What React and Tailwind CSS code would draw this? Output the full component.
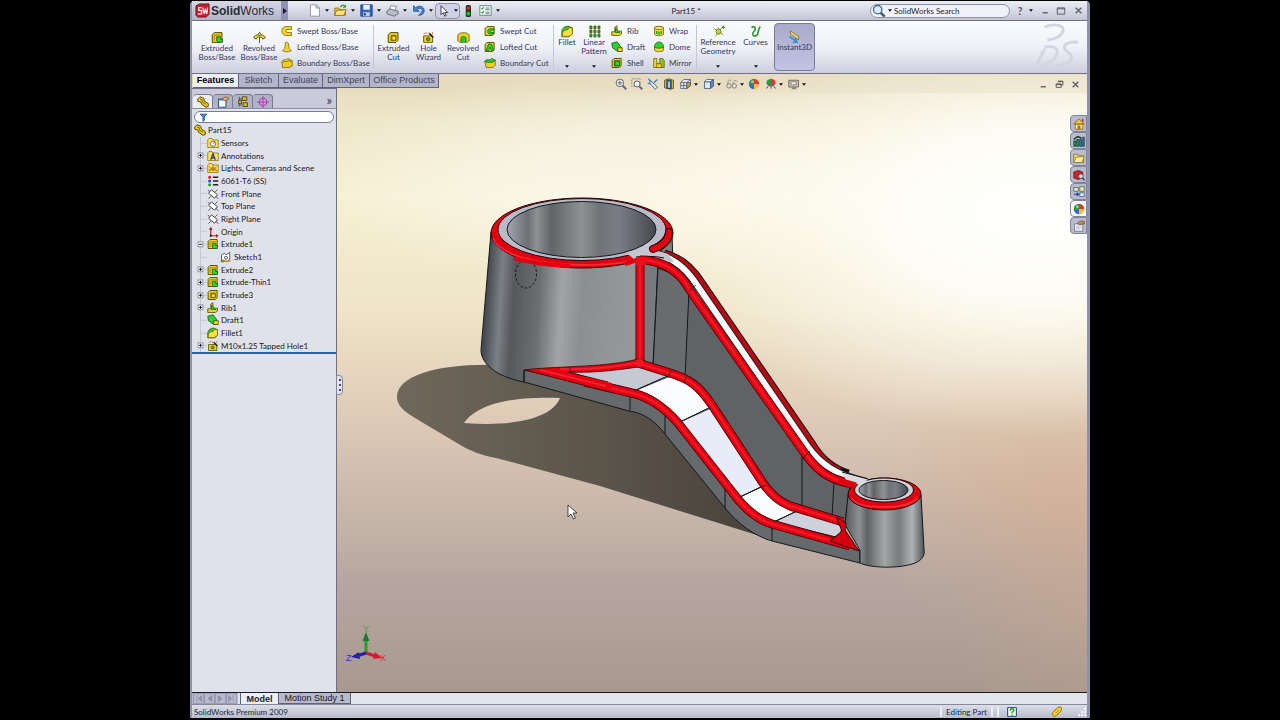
import React from "react";

const INK = "#4d4700";

/* ---------- icon shapes, all on a 16 x 16 grid ---------- */
const block = (
  <path d="M1.5 4.5 4 2h9.5v9.5L11 14H1.5z" fill="#f0d020" stroke={INK} strokeWidth="1.2" />
);
const folder = (
  <path d="M1 4 2.500 2h4l1.500 2H15v10H1z" fill="#ffe45c" stroke="#8a6a10" strokeWidth="1" />
);

const SHAPES = {
  extrude: (
    <>
      {block}
      <path d="M4 5h8M4 5v7" stroke="#8c7a00" fill="none" />
      <path d="M7 7h4.500v3H14v4h-5l-2-2z" fill="#3ccf34" stroke="#0a5a10" />
    </>
  ),
  revolve: (
    <>
      <path d="M8 1v14" stroke="#3a3a3a" />
      <path d="M8 4.500C3 4.500 1 6.500 1 8.500l3 1.500c0-2 2-2.500 4-2.500s4 .5 4 2.500l3-1.500C15 6.500 13 4.500 8 4.500z" fill="#f5d321" stroke={INK} />
      <circle cx="8" cy="4" r="1.600" fill="#fff2a0" stroke={INK} />
    </>
  ),
  sweep: (
    <path d="M14 2H7C3 2 1 5 1 8s2 6 6 6h7v-4H8c-2 0-2-4 0-4h6z" fill="#f7d423" stroke="#7a6400" />
  ),
  loft: <path d="M6 2c2-1 4 0 4 2l1 6 3 3c-3 2-9 2-12 0l3-3z" fill="#f7d423" stroke="#7a6400" />,
  boundary: (
    <>
      <path d="M1 6c3-4 6-1 8-4l6 3v7l-4 2H2z" fill="#f0cf20" stroke="#6f5b00" />
      <path d="M2 7c3-2 6 0 8-2l4 1" stroke="#6f5b00" fill="none" />
    </>
  ),
  cut: (
    <>
      {block}
      <path d="M5 5.500h6v6H5z" fill="#b59a00" stroke={INK} />
      <path d="M7 7.500h3v3H7z" fill="#fbe95a" />
    </>
  ),
  hole: (
    <>
      <path d="M2 6h9l2 2v6H2z" fill="#f0d020" stroke={INK} />
      <circle cx="7.500" cy="10" r="2" fill="#36b52c" stroke={INK} />
      <path d="m9 3 5 5" stroke="#222" strokeWidth="2" />
      <path d="M2 3h2M5 1v2M13 1v3M7 4l1-2" stroke="#c9681b" />
    </>
  ),
  revcut: (
    <>
      <path d="M1 5c2-4 12-4 14 0v7l-3 2H4l-3-2z" fill="#f0d020" stroke="#6f5b00" />
      <path d="M5 14V9c0-3 6-3 6 0v5" fill="#2fc72f" stroke="#0a6a10" />
    </>
  ),
  sweepcut: (
    <>
      {block}
      <path d="M13 5H9c-3 0-4 1-4 3.500S6 12 9 12h4v-2H9c-1 0-1-3 0-3h4z" fill="#2fd12f" stroke="#0a6a10" />
    </>
  ),
  loftcut: (
    <>
      {block}
      <path d="M6 4h4l3 9h-3l-2-5-2 5H3z" fill="#2fd12f" stroke="#0a6a10" />
    </>
  ),
  boundarycut: (
    <>
      <path d="M1 6h11l3-2v7l-3 3H3z" fill="#f0d020" stroke="#6f5b00" />
      <path d="M1 6c3-5 7 0 9-4l5 2-3 3H4z" fill="#2fc72f" stroke="#0a6a10" />
    </>
  ),
  fillet: (
    <>
      <path d="M1 9c0-5 3-7.500 8-7.500l5 2V11l-4 3.500H1z" fill="#2fc72f" stroke={INK} />
      <path d="M2 14c-1-5 1-8 6-8l2-3 4 1v7l-4 3z" fill="#f9df3c" stroke="#6f5b00" strokeWidth=".8" />
    </>
  ),
  pattern: (
    <>
      {[2, 7, 12].map((x) =>
        [1, 6, 11].map((y) => (
          <rect key={x + "-" + y} x={x} y={y} width="3" height="4" rx="1" fill={y === 11 ? "#2ba32b" : "#5d7d12"} stroke="#1d4d0c" strokeWidth=".6" />
        ))
      )}
    </>
  ),
  rib: (
    <>
      <path d="M1 9h4V3l3-2v8l6-1v4l-3 2H1z" fill="#f0d020" stroke={INK} />
      <path d="M6 10V4l6 6z" fill="#2fc72f" stroke="#0a6a10" />
    </>
  ),
  draft: (
    <>
      <path d="M1 3 8 1l6 8v5H9L2 9z" fill="#2fd12f" stroke="#0a4a10" />
      <path d="M9 9h6v5H9z" fill="#f5d728" stroke={INK} />
    </>
  ),
  shell: (
    <>
      {block}
      <path d="M4.500 5h7v7h-7z" fill="#1f9e1f" stroke="#0a4a10" />
      <path d="M6.500 7h4v3.500h-4z" fill="#3be03b" />
    </>
  ),
  wrap: (
    <>
      <path d="M2 4c0-3 12-3 12 0v8c0 3-12 3-12 0z" fill="#f5d728" stroke="#6f5b00" />
      <ellipse cx="8" cy="4" rx="6" ry="2" fill="#fff08a" stroke="#6f5b00" />
      <path d="M4 8h2v4H4zM7 9h2v4H7zM10 8h2v4h-2z" fill="#1faa1f" />
    </>
  ),
  dome: (
    <>
      <path d="M2 8v4c0 3 12 3 12 0V8z" fill="#f5d728" stroke="#6f5b00" />
      <path d="M2 8c0-9 12-9 12 0 0 2-12 2-12 0z" fill="#2fd12f" stroke="#0a6a10" />
    </>
  ),
  mirror: (
    <>
      <path d="M1 2h4v7h3v5H1z" fill="#f5d728" stroke="#6f5b00" />
      <path d="M9 2h4l2 3v9H9z" fill="#8dc424" stroke="#4b6b00" />
      <path d="M5 9h6v5H5z" fill="#f5d728" stroke="#6f5b00" />
    </>
  ),
  refgeo: (
    <>
      <path d="m2 4 12 8M14 1 4 14M8 3v9" stroke="#6c8a12" fill="none" />
      <circle cx="8" cy="8" r="3" fill="#d7d32a" stroke="#4d7a10" />
      <path d="M12 3h4M14 1v4" stroke="#1b7d1b" />
    </>
  ),
  curves: <path d="M3 3c5-3 6 2 3 5s-1 7 3 5 1-8 5-11" fill="none" stroke="#189a2c" strokeWidth="2" />,
  instant: (
    <>
      <path d="m3 1 10 7v4L3 5z" fill="#f3dd62" stroke="#7c6a20" />
      <path d="m2 8 8 6M6 15h5l-2-5" fill="none" stroke="#2d8fd4" strokeWidth="2" />
    </>
  ),
  part: (
    <>
      <path d="M1 4 4 1l5 2 1 4 5 3v4l-3 1-6-4-1-3-4-1z" fill="#f2cf18" stroke="#4d3f00" strokeWidth="1.200" />
      <path d="m4 4 3 1v3l5 3" fill="none" stroke="#4d3f00" />
    </>
  ),
  property: (
    <>
      <path d="M2 4h10v11H2z" fill="#f6f8ff" stroke="#36547e" strokeWidth="1.400" />
      <path d="M2 4h10v2H2z" fill="#4a76b4" />
      <path d="M7 4c2-3 5-3 8-2v3l-5 1z" fill="#f0b070" stroke="#7a4a20" />
    </>
  ),
  config: (
    <>
      <path d="M3 1v13M3 4h4M3 12h4" stroke="#333" fill="none" />
      <path d="M7 1h6v5H7zM8 9h6v5H8zM2 6h4v4H2z" fill="#d9b91a" stroke="#3d3300" />
    </>
  ),
  target: (
    <>
      <circle cx="8" cy="8" r="5" fill="none" stroke="#c02fc4" strokeWidth="1.500" />
      <path d="M8 0v16M0 8h16" stroke="#c02fc4" strokeWidth="1.300" />
    </>
  ),
  sensors: (
    <>
      {folder}
      <circle cx="8" cy="9" r="3.500" fill="#fff" stroke="#444" />
      <path d="m8 9 2-2" stroke="#222" />
    </>
  ),
  annotations: (
    <>
      {folder}
      <path d="m5 13 3-8 3 8M6 10.500h4" fill="none" stroke="#1c2f80" strokeWidth="1.600" />
    </>
  ),
  lights: (
    <>
      {folder}
      <path d="M3 12c2-6 8-6 10 0l-3-2-2 2-2-2zM8 4v3M3 6l2 2M13 6l-2 2" fill="#d9831c" stroke="#a85a00" />
    </>
  ),
  material: (
    <>
      <circle cx="3.500" cy="3" r="2" fill="#d42020" />
      <circle cx="3.500" cy="8" r="2" fill="#2040c0" />
      <circle cx="3.500" cy="13" r="2" fill="#1c9a2c" />
      <path d="M8 3h7M8 8h7M8 13h7" stroke="#222" strokeWidth="1.800" />
    </>
  ),
  plane: (
    <>
      <path d="M6 2.500 14 9l-4 4.500L2 7z" fill="#fff" stroke="#333" strokeWidth="1.200" />
      <path d="M1 2.500 3.500 5M12 11l3 3.500M14 2l-3 3M5 11l-3 3" stroke="#333" fill="none" />
    </>
  ),
  origin: (
    <>
      <path d="M5 14V3M5 13h9" stroke="#b01818" strokeWidth="1.600" />
      <path d="m2.500 5 2.500-4 2.500 4zM12 10.500 15.500 13 12 15.500z" fill="#b01818" />
      <circle cx="5" cy="13" r="1.500" fill="#222" />
    </>
  ),
  sketch: (
    <>
      <path d="M2 13V5l4-2 2 2 5-3v9l-4 3z" fill="#fff" stroke="#333" />
      <circle cx="8" cy="9" r="2" fill="none" stroke="#333" />
      <path d="m3 12 6 2 5-1" stroke="#c98a2c" strokeWidth="2" fill="none" />
      <path d="M1 13h4v2H1z" fill="#2a9d2a" />
    </>
  ),
  file: <path d="M3 1h7l4 4v10H3zM10 1v4h4" fill="#fff" stroke="#7d879c" />,
  open: (
    <>
      <path d="M1 5h5l1 2h7v7H1z" fill="#f1c232" stroke="#8f6c10" />
      <path d="m3 8 12-1-3 7H1z" fill="#ffe27a" stroke="#8f6c10" />
      <path d="M8 4c2-4 4-3 6 0M14 4V1M14 4h-3" fill="none" stroke="#2aa52a" strokeWidth="1.500" />
    </>
  ),
  save: (
    <>
      <path d="M1 1h14v14H1z" fill="#2f63c4" stroke="#173a86" />
      <path d="M4 1h8v6H4z" fill="#e6eefc" />
      <path d="M4 10h8v5H4z" fill="#bccbe6" />
      <path d="M5 11h2v3H5z" fill="#173a86" />
    </>
  ),
  print: (
    <>
      <path d="m4 7 2-5 7 1-2 5z" fill="#fff" stroke="#6f7688" />
      <path d="m1 9 4-3 10 3v3l-5 3-9-3z" fill="#b9bdc9" stroke="#555b6b" />
    </>
  ),
  undo: (
    <path d="M2 2v7h7L6.500 6.500c3-2 6-1 6 1.500S10 12 8 14c4 0 7-2 7-6 0-5-6-7-10.500-3.500z" fill="#3e84d8" stroke="#1d4f9c" />
  ),
  arrow: <path d="M4 1v12l3-3 2 5 2-1-2-4h4z" fill="#fff" stroke="#2b2f45" strokeWidth="1.200" />,
  traffic: (
    <>
      <rect x="5" y="0" width="7" height="16" rx="2" fill="#1d3a1d" />
      <circle cx="8.500" cy="4" r="2.300" fill="#e02828" />
      <circle cx="8.500" cy="11.500" r="2.500" fill="#22c32c" />
    </>
  ),
  options: (
    <>
      <path d="M1 2h14v12H1z" fill="#eef7ee" stroke="#5f7a6f" />
      <path d="m3 5 1 1 2-2M3 10l1 1 2-2" stroke="#1c9a2c" fill="none" strokeWidth="1.300" />
      <path d="M8 5h5M8 7h5M8 10h5M8 12h5" stroke="#5b6b8c" />
    </>
  ),
  lens: (
    <>
      <path d="m9.500 9.500 5 5" stroke="#556" strokeWidth="3" />
      <circle cx="6.500" cy="6.500" r="4.800" fill="#d7eefa" stroke="#3b6c90" strokeWidth="1.500" />
    </>
  ),
  zoomfit: (
    <>
      <path d="m10 10 5 5" stroke="#667" strokeWidth="2.500" />
      <circle cx="6.500" cy="6.500" r="5" fill="#e9edf0" stroke="#667" strokeWidth="1.300" />
      <path d="M6.500 3.500v6M3.500 6.500h6" stroke="#444" />
    </>
  ),
  zoomarea: (
    <>
      <path d="M1 1h11v10H1z" fill="none" stroke="#666" strokeDasharray="2 1.500" />
      <path d="m11 11 4 4" stroke="#667" strokeWidth="2.500" />
      <circle cx="8" cy="8" r="4" fill="#e9edf0" stroke="#667" strokeWidth="1.300" />
    </>
  ),
  prevview: (
    <>
      <path d="m5 4 9 8-3 3-8-9z" fill="#e7eef6" stroke="#3d5d88" strokeWidth="1.200" />
      <path d="m9 6 5-4M1 8l4-1M2 1l3 4" stroke="#2d7fc8" strokeWidth="1.700" />
    </>
  ),
  section: (
    <>
      <path d="m2 3 5-2 7 2v11l-4 1-8-2z" fill="#d8b02c" stroke="#4a4630" />
      <path d="M5 3h6v11H5z" fill="#2f6fb0" stroke="#234" />
      <path d="M7 5h2v8H7z" fill="#d6e4f2" />
    </>
  ),
  orient: (
    <>
      <path d="M1 6h8v8H1zM1 6l4-4h9v8l-5 4M9 6l5-4M5 6v8M1 10h8" fill="#e5e8ee" stroke="#4a5468" />
      <path d="M9 6h5v4l-5 4z" fill="#c79a52" stroke="#4a5468" />
    </>
  ),
  display: (
    <>
      <path d="M2 5h8v9H2z" fill="#dce6f5" stroke="#35507c" />
      <path d="m2 5 3-3h9l-4 3z" fill="#f4f8ff" stroke="#35507c" />
      <path d="m10 5 4-3v9l-4 3z" fill="#5f86c2" stroke="#35507c" />
    </>
  ),
  glasses: (
    <>
      <circle cx="4" cy="10.500" r="3" fill="none" stroke="#778" strokeWidth="1.200" />
      <circle cx="11" cy="10.500" r="3" fill="none" stroke="#778" strokeWidth="1.200" />
      <path d="M2 8c1-6 4-6 5-4M9 8c1-6 5-5 6-3" fill="none" stroke="#778" />
    </>
  ),
  ball: (
    <>
      <circle cx="8" cy="8" r="7" fill="#e8e8ea" />
      <path d="M8 8V1a7 7 0 0 0-7 7z" fill="#2c9a3a" />
      <path d="M8 8V1a7 7 0 0 1 7 7z" fill="#e0362c" />
      <path d="M8 8h7a7 7 0 0 1-7 7z" fill="#f0c22c" />
      <path d="M8 8v7a7 7 0 0 1-7-7z" fill="#2f6fd0" />
      <circle cx="6" cy="5" r="2" fill="#fff" opacity=".5" />
    </>
  ),
  scene: (
    <>
      <path d="M8 8V1a6 6 0 0 0-6 7z" fill="#2c9a3a" />
      <path d="M8 8V1a6 6 0 0 1 6 7z" fill="#e0362c" />
      <path d="M2 8h12l-3 3H5z" fill="#667" />
      <path d="m4 11-2 3M8 11v3M12 11l2 3" stroke="#444" strokeWidth="1.300" />
    </>
  ),
  viewset: (
    <>
      <path d="M1 3h13v9H1z" fill="#c9c3b8" stroke="#55524c" />
      <path d="M4 5h7v4H4z" fill="#f2efe8" stroke="#77736b" />
      <path d="M5 12h6v3H5z" fill="#8c877c" />
    </>
  ),
  home: (
    <>
      <path d="M3 8h10v7H3z" fill="#ffe9a0" stroke="#7c5a10" />
      <path d="m1 8 7-7 7 7z" fill="#f4c53c" stroke="#7c4a10" />
      <path d="M12 1h2v4h-2z" fill="#c9252c" />
      <path d="M6 10h4v5H6z" fill="#a8701c" />
    </>
  ),
  library: (
    <>
      <path d="M1 8h3v7H1zM5 6h3v9H5z" fill="#2d9d5a" stroke="#14352c" />
      <path d="M9 6l2-1 1 10H9zM13 3h2v12h-2z" fill="#3f7fc8" stroke="#14352c" />
      <path d="m1 6 5-4 5 2" stroke="#14352c" strokeWidth="2" fill="none" />
    </>
  ),
  openfolder: (
    <>
      <path d="M1 3h5l1 2h7v9H1z" fill="#f4d36a" stroke="#8f6c10" />
      <path d="m4 7 11-1-3 8H1z" fill="#ffeeb0" stroke="#8f6c10" />
    </>
  ),
  swsearch: (
    <>
      <path d="m1 4 6-2 6 2v8l-6 2-6-2z" fill="#c9252c" stroke="#6d1014" />
      <circle cx="10.500" cy="9.500" r="3" fill="#eef" stroke="#445" />
      <path d="m12.500 12 3 3" stroke="#445" strokeWidth="2" />
    </>
  ),
  palette: (
    <>
      <path d="M1 2h6v5H1zM9 1h6v6H9z" fill="#f3e9a0" stroke="#44597d" />
      <path d="M9 9h6v5H9z" fill="#dfe6f2" stroke="#44597d" />
      <path d="M1 11h6M5 9l2.500 2L5 13" stroke="#1c3fb8" strokeWidth="1.600" fill="none" />
    </>
  ),
  custom: (
    <>
      <path d="M2 5h11v10H2z" fill="#eceff6" stroke="#666c7c" />
      <path d="M4 8h7M4 10h7M4 12h5" stroke="#b8bccc" />
      <path d="M6 5c2-4 6-4 9-3v3l-6 1z" fill="#c9905a" stroke="#6b4322" />
    </>
  ),
  help: (
    <>
      <path d="M1 1h14v14H1z" fill="#eaffea" stroke="#2b3f7c" strokeWidth="1.600" />
      <path d="M5 6c0-4 6-4 6-1 0 2-3 2-3 5M8 11.500v2" fill="none" stroke="#149a24" strokeWidth="2.200" />
    </>
  ),
  tag: (
    <>
      <path d="M2 9 9 2c2-1 5-1 5 1s0 3-1 4l-6 6c-3 2-7-1-5-4z" fill="#f6cf27" stroke="#8f6c10" strokeWidth="1.300" />
      <path d="m6 10 5-5" stroke="#a67f10" />
    </>
  ),
  funnel: <path d="M2 2h12l-4.500 5v6L7 15V7z" fill="#3f8fe0" stroke="#173f86" strokeWidth="1.300" />,
  min: <path d="M3 12h9" stroke="#555a68" strokeWidth="2.400" />,
  max: <path d="M2 3h12v10H2zM2 4.500h12" fill="none" stroke="#555a68" strokeWidth="1.500" />,
  restore: <path d="M5 2h9v7h-3M2 7h9v6H2zM5 3h9M2 8h9" fill="none" stroke="#444" strokeWidth="1.500" />,
  close: <path d="m3 3 10 10M13 3 3 13" stroke="#555a68" strokeWidth="2.200" />,
};

function Icon({ name, className = "size-3" }) {
  return (
    <svg viewBox="0 0 16 16" className={"shrink-0 " + className} aria-hidden="true">
      {SHAPES[name]}
    </svg>
  );
}

function Caret() {
  return (
    <svg viewBox="0 0 6 4" className="h-[3px] w-1 shrink-0" aria-hidden="true">
      <path d="M0 0h6L3 4z" fill="#111" />
    </svg>
  );
}

/* ---------- title bar ---------- */
function QuickButton({ icon, label, caret = true }) {
  return (
    <button aria-label={label} className="flex w-[26px] items-center justify-center gap-1">
      <Icon name={icon} className="size-[13px]" />
      {caret && <Caret />}
    </button>
  );
}

function TitleBar() {
  return (
    <header className="flex h-5 items-center border-b border-[#6d7085] bg-gradient-to-b from-[#eceef5] to-[#c3c6d6]">
      <div className="flex h-full w-24 items-center bg-gradient-to-b from-[#d6d8e6] to-[#b2b5ca] pl-[3px]">
        <svg viewBox="0 0 16 16" className="size-[15px] shrink-0" aria-hidden="true">
          <path d="m1 3 4-2h10v11l-3 3H3l-2-2z" fill="#c71f2b" stroke="#75101a" />
          <path d="M7 5H4v3h3v3.500H3M8.500 5l1 6.500L11 7l1.500 4.500 1-6.500" fill="none" stroke="#fff" strokeWidth="1.300" />
        </svg>
        <span className="pl-px font-['Liberation_Sans',sans-serif] text-xs leading-none text-[#2a2b33]">
          <b>Solid</b>Works
        </span>
        <button aria-label="Show menus" className="ml-auto flex h-full w-[7px] items-center justify-center bg-[#8f93b5]">
          <svg viewBox="0 0 4 6" className="h-[6px] w-1"><path d="M0 0v6l4-3z" fill="#16182c" /></svg>
        </button>
      </div>
      <div className="ml-[17px] flex h-full items-center">
        <QuickButton icon="file" label="New" />
        <QuickButton icon="open" label="Open" />
        <QuickButton icon="save" label="Save" />
        <QuickButton icon="print" label="Print" />
        <QuickButton icon="undo" label="Undo" />
        <button aria-label="Select" className="flex h-4 w-[25px] items-center justify-center gap-1 rounded-sm border border-[#8b8fae] bg-[#cfd1e4]">
          <Icon name="arrow" className="size-3" />
          <Caret />
        </button>
        <button aria-label="Rebuild" className="flex w-4 justify-center"><Icon name="traffic" /></button>
        <QuickButton icon="options" label="Options" />
      </div>
      <h1 className="flex-1 text-center">Part15 *</h1>
      <label className="flex h-3.5 w-[140px] items-center gap-0.5 rounded-full border border-[#8e91a6] bg-[#f1f2f8] pl-px">
        <Icon name="lens" className="size-3.5" />
        <Caret />
        <input aria-label="Search" defaultValue="SolidWorks Search" className="w-full min-w-0 bg-transparent outline-none" />
      </label>
      <div className="flex items-center pl-[3px]">
        <button aria-label="Help" className="flex w-6 items-center justify-center gap-1.5 text-[11px] font-bold text-[#555a68]">
          ?<Caret />
        </button>
        <button aria-label="Minimize" className="flex w-4 justify-center"><Icon name="min" className="size-[9px]" /></button>
        <button aria-label="Maximize" className="flex w-4 justify-center"><Icon name="max" className="size-[10px]" /></button>
        <button aria-label="Close" className="flex w-[18px] justify-center"><Icon name="close" className="size-[9px]" /></button>
      </div>
    </header>
  );
}

/* ---------- ribbon ---------- */
function Tool({ icon, lines, width, caret, className = "pt-2.5" }) {
  return (
    <button className={"flex h-full flex-col items-center " + width + " " + className}>
      <Icon name={icon} className="size-[13px]" />
      <span className="flex flex-col leading-[9px]">
        {lines.map((l) => (
          <span key={l}>{l}</span>
        ))}
      </span>
      {caret && <span className="mt-auto flex pb-[5px]"><Caret /></span>}
    </button>
  );
}

function ToolList({ items, className }) {
  return (
    <ul className={"flex h-full flex-col justify-between py-1 " + className}>
      {items.map(([icon, label]) => (
        <li key={label}>
          <button className="flex items-center gap-1 leading-3">
            <Icon name={icon} />
            {label}
          </button>
        </li>
      ))}
    </ul>
  );
}

const Divider = () => <div className="h-11 w-px shrink-0 bg-[#c3c6d6]" />;

function Ribbon() {
  return (
    <div className="flex h-[53px] items-center whitespace-nowrap border-b border-[#6d7085] bg-gradient-to-b from-[#fbfcfe] via-[#f0f1f7] to-[#cdcfde] pl-1 text-[#33375a]">
      <Tool icon="extrude" lines={["Extruded", "Boss/Base"]} width="w-[42px]" />
      <Tool icon="revolve" lines={["Revolved", "Boss/Base"]} width="w-[42px]" />
      <ToolList className="w-[93px] pl-px" items={[["sweep", "Swept Boss/Base"], ["loft", "Lofted Boss/Base"], ["boundary", "Boundary Boss/Base"]]} />
      <Divider />
      <Tool icon="cut" lines={["Extruded", "Cut"]} width="w-[39px]" />
      <Tool icon="hole" lines={["Hole", "Wizard"]} width="w-[31px]" />
      <Tool icon="revcut" lines={["Revolved", "Cut"]} width="w-[38px]" />
      <ToolList className="w-[71px] pl-0.5" items={[["sweepcut", "Swept Cut"], ["loftcut", "Lofted Cut"], ["boundarycut", "Boundary Cut"]]} />
      <Divider />
      <Tool icon="fillet" lines={["Fillet"]} width="w-[26px]" caret className="pt-1" />
      <Tool icon="pattern" lines={["Linear", "Pattern"]} width="w-[28px]" caret className="pt-1" />
      <ToolList className="w-[42px] pl-[3px]" items={[["rib", "Rib"], ["draft", "Draft"], ["shell", "Shell"]]} />
      <ToolList className="w-[46px] pl-[3px]" items={[["wrap", "Wrap"], ["dome", "Dome"], ["mirror", "Mirror"]]} />
      <Divider />
      <Tool icon="refgeo" lines={["Reference", "Geometry"]} width="w-[42px]" caret className="pt-1" />
      <Tool icon="curves" lines={["Curves"]} width="w-[33px]" caret className="pt-1" />
      <button className="ml-0.5 flex h-12 w-[41px] flex-col items-center rounded-sm border border-[#777a9c] bg-gradient-to-b from-[#a9abcc] to-[#c3c4e2] pt-1.5 leading-[9px]">
        <Icon name="instant" className="size-[13px]" />
        Instant3D
      </button>
      <svg viewBox="0 0 50 50" className="ml-auto mr-1.5 h-12 w-12" fill="none" stroke="#d3d5e0" strokeWidth="3" aria-hidden="true">
        <path d="M12 4c10-4 22-2 19 5-2 5-9 8-16 9" />
        <path d="M12 25c10-2 16 2 12 9s-13 12-21 12l9-19" />
        <path d="M47 20c-9-1-16 2-14 7 2 4 9 5 7 10-2 6-10 8-18 7" />
      </svg>
    </div>
  );
}

/* ---------- tabs over the viewport ---------- */
const TABS = [
  ["Features", "w-[46px]"],
  ["Sketch", "w-10"],
  ["Evaluate", "w-11"],
  ["DimXpert", "w-[47px]"],
  ["Office Products", "w-[69px]"],
];

function CommandTabs() {
  return (
    <nav role="tablist" className="relative z-10 flex h-3.5 whitespace-nowrap pl-px font-['Liberation_Sans',sans-serif] text-[9px] leading-3">
      {TABS.map(([label, width], i) => (
        <button
          key={label}
          role="tab"
          aria-selected={i === 0}
          className={
            "flex justify-center border-r border-b border-[#5f6278] " +
            width +
            (i === 0 ? " bg-[#eceef5] font-bold text-black" : " bg-[#b3b6ca] text-[#3f4257]")
          }
        >
          {label}
        </button>
      ))}
    </nav>
  );
}

/* ---------- feature tree ---------- */
const TREE = [
  [0, "part", "Part15", ""],
  [1, "sensors", "Sensors", ""],
  [1, "annotations", "Annotations", "+"],
  [1, "lights", "Lights, Cameras and Scene", "+"],
  [1, "material", "6061-T6 (SS)", ""],
  [1, "plane", "Front Plane", ""],
  [1, "plane", "Top Plane", ""],
  [1, "plane", "Right Plane", ""],
  [1, "origin", "Origin", ""],
  [1, "extrude", "Extrude1", "-"],
  [2, "sketch", "Sketch1", ""],
  [1, "extrude", "Extrude2", "+"],
  [1, "extrude", "Extrude-Thin1", "+"],
  [1, "cut", "Extrude3", "+"],
  [1, "rib", "Rib1", "+"],
  [1, "draft", "Draft1", ""],
  [1, "fillet", "Fillet1", ""],
  [1, "hole", "M10x1.25 Tapped Hole1", "+"],
];

function Expander({ sign }) {
  return (
    <svg viewBox="0 0 13 13" className="h-full w-[13px] shrink-0" aria-hidden="true">
      <path d="M6.500 0v13M6.500 6.500H13" stroke="#c3c5cc" />
      {sign && <rect x="4" y="4" width="5" height="5" fill="#fff" stroke="#8a8d99" />}
      {sign && <path d={sign === "+" ? "M5 6.500h3M6.500 5v3" : "M5 6.500h3"} stroke="#111" />}
    </svg>
  );
}

function FeaturePanel() {
  return (
    <aside className="relative flex w-[145px] shrink-0 flex-col border-t border-r border-[#6d7085] bg-[#dfe2ea]">
      <div className="flex h-5 items-end border-b border-[#8b8ea3] bg-[#c9cbdb] pl-px">
        {["part", "property", "config", "target"].map((n, i) => (
          <button
            key={n}
            aria-label={n}
            className={
              "flex h-3.5 w-5 items-center justify-center rounded-t-sm border-t border-r border-[#777a90] " +
              (i === 0 ? "bg-[#eceef5]" : "bg-[#b0b3c8]")
            }
          >
            <Icon name={n} />
          </button>
        ))}
        <button aria-label="Expand panel" className="ml-auto pr-1 text-[13px] leading-[15px] text-[#333650]">»</button>
      </div>
      <label className="mx-0.5 mt-0.5 flex h-3 items-center rounded-full border border-[#777c95] bg-white pl-1">
        <Icon name="funnel" className="size-[9px]" />
        <input aria-label="Filter" className="w-full min-w-0 bg-transparent outline-none" />
      </label>
      <ul className="mt-px grid h-[230px] auto-rows-fr border-b-2 border-[#2f64a0] pl-0.5 text-[#16171f]">
        {TREE.map(([depth, icon, label, sign]) => (
          <li key={label} className="flex items-center leading-3">
            {depth > 0 && <Expander sign={sign} />}
            {depth > 1 && <span className="w-[13px]" />}
            <Icon name={icon} />
            <span className="whitespace-nowrap pl-0.5">{label}</span>
          </li>
        ))}
      </ul>
      <button aria-label="Collapse panel" className="absolute top-[286px] -right-[7px] flex h-5 w-[7px] flex-col items-center justify-evenly rounded-r-sm border border-[#85889b] bg-[#e3e5ee]">
        <i className="size-0.5 bg-[#4a4d75]" />
        <i className="size-0.5 bg-[#4a4d75]" />
        <i className="size-0.5 bg-[#4a4d75]" />
      </button>
    </aside>
  );
}

/* ---------- model drawing ---------- */
function Pipe({ d, w = 8 }) {
  return (
    <g fill="none" strokeLinejoin="round">
      <path d={d} stroke="#3a0004" strokeWidth={w + 1} />
      <path d={d} stroke="#e00010" strokeWidth={w - 0.5} />
      <path d={d} stroke="#ff2530" strokeWidth={w / 3} opacity=".6" />
    </g>
  );
}

const UPPER = "M640 260C658 260 672 266 684 281L694 296 806 455C818 471 828 479 852 484";
const INNER = "M638 363 670 373C690 379 699 386 712 405L763 483C773 498 784 505 797 508L843 522";
const LOWER = "M585 382 632 393C650 397 664 407 678 423L733 493C744 508 756 519 772 524L850 546";

function Scene() {
  return (
    <svg viewBox="192 73 895 620" preserveAspectRatio="xMidYMid slice" className="absolute inset-0 size-full" role="img" aria-label="Bracket model">
      <defs>
        <linearGradient id="bg" x1="0" y1="0" x2="0" y2="1">
          <stop offset="0" stopColor="#e4d9bb" />
          <stop offset=".08" stopColor="#efe7cb" />
          <stop offset=".2" stopColor="#f6f0d4" />
          <stop offset=".38" stopColor="#efe4c8" />
          <stop offset=".52" stopColor="#e2d0ba" />
          <stop offset=".66" stopColor="#cfbcae" />
          <stop offset=".82" stopColor="#b5a7a0" />
          <stop offset="1" stopColor="#a8998f" />
        </linearGradient>
        <radialGradient id="glow">
          <stop offset="0" stopColor="#fff" />
          <stop offset=".4" stopColor="#fffffa" stopOpacity=".85" />
          <stop offset="1" stopColor="#fffdf0" stopOpacity="0" />
        </radialGradient>
        <radialGradient id="tan">
          <stop offset="0" stopColor="#dba985" stopOpacity=".6" />
          <stop offset="1" stopColor="#dba985" stopOpacity="0" />
        </radialGradient>
        <linearGradient id="body" x1="481" x2="640" y1="0" y2="10" gradientUnits="userSpaceOnUse">
          <stop offset="0" stopColor="#5d6164" />
          <stop offset=".08" stopColor="#7b7f84" />
          <stop offset=".15" stopColor="#45494f" />
          <stop offset=".24" stopColor="#7b8087" />
          <stop offset=".32" stopColor="#55595c" />
          <stop offset=".48" stopColor="#6b6f70" />
          <stop offset=".62" stopColor="#a1a5a5" />
          <stop offset=".75" stopColor="#8b8f8f" />
          <stop offset="1" stopColor="#939797" />
        </linearGradient>
        <linearGradient id="bore">
          <stop offset="0" stopColor="#a3a6b0" />
          <stop offset=".14" stopColor="#6c7074" />
          <stop offset=".2" stopColor="#8d9194" />
          <stop offset=".3" stopColor="#606467" />
          <stop offset=".5" stopColor="#8e9292" />
          <stop offset=".62" stopColor="#6f7376" />
          <stop offset=".75" stopColor="#7a7d86" />
          <stop offset="1" stopColor="#45484c" />
        </linearGradient>
        <linearGradient id="boss">
          <stop offset="0" stopColor="#55595b" />
          <stop offset=".18" stopColor="#8c9092" />
          <stop offset=".28" stopColor="#5f6365" />
          <stop offset=".5" stopColor="#a3a7a7" />
          <stop offset=".68" stopColor="#777b7c" />
          <stop offset=".85" stopColor="#b0b3b6" />
          <stop offset="1" stopColor="#505355" />
        </linearGradient>
        <linearGradient id="shadow" x1="0" x2="1">
          <stop offset="0" stopColor="#6f685b" />
          <stop offset=".5" stopColor="#5d564c" />
          <stop offset="1" stopColor="#47413a" />
        </linearGradient>
        <filter id="soft"><feGaussianBlur stdDeviation=".6" /></filter>
      </defs>

      <rect x="192" y="73" width="895" height="620" fill="url(#bg)" />
      <ellipse cx="1060" cy="500" rx="200" ry="150" fill="url(#tan)" opacity=".7" />
      <ellipse cx="1090" cy="620" rx="140" ry="120" fill="url(#tan)" opacity=".4" />
      <ellipse cx="1040" cy="215" rx="400" ry="220" fill="url(#glow)" />
      <ellipse cx="640" cy="180" rx="330" ry="110" fill="url(#glow)" opacity=".5" />
      <rect x="192" y="73" width="895" height="20" fill="#e6dbc0" opacity=".35" />

      <path filter="url(#soft)" fillRule="evenodd" fill="url(#shadow)" d="M500 365C440 363 397 375 397 397 397 409 412 416 425 424L462 446C474 453 486 456 500 459L600 486 760 536 770 500 640 380ZM464 423C475 408 500 396 560 398 552 418 515 427 464 423Z" />

      <g stroke="#15171a" strokeWidth="1" strokeLinejoin="round">
        <path d="M660 215 672 235 673 262 650 262Z" fill="#7b7f80" />
        <path d="M491 232 481 350C481 364 497 377 524 382L600 392 640 392V250Z" fill="url(#body)" />
        <path d="M524 370 632 393C650 397 664 407 678 423L733 493C744 508 756 519 772 524L860 550V563L772 541C755 536 739 525 725 508L665 434C655 421 644 413 629 411L524 382Z" fill="#666a6c" />
        <path d="M640 262H660C672 266 680 274 694 296L806 455C818 471 828 479 850 486L845 524 797 508C784 505 773 498 763 483L712 405C699 386 690 379 670 373L638 363Z" fill="#5f6365" />
        <path d="M640 262H658L653 366 638 363Z" fill="#777b7c" />
        <path d="M658 268C670 272 680 278 689 290L685 378 653 367Z" fill="#686c6e" />
        <path d="M565 371 638 365 670 375 634 391Z" fill="#c6c9d4" />
        <path d="M634 391 670 375C690 381 699 388 711 407L680 422C666 407 652 396 634 391Z" fill="#fafcff" />
        <path d="M680 422 711 407 765 485 740 497Z" fill="#e6ecf8" />
        <path d="M740 497 765 485C774 499 784 507 797 511L774 522C758 519 748 508 740 497Z" fill="#fafcff" />
        <path d="M774 522 797 511 842 525 840 538Z" fill="#cfd2dc" />
        <path d="M802 455V507M834 482 832 518M524 370V382M630 393V411M665 412V434M725 486V508M772 524V541" fill="none" />
      </g>

      <path d="M848 495 845 525 860 550V563C870 568 900 569 915 563 922 560 925 556 924 549L921 495Z" fill="url(#boss)" stroke="#15171a" />

      <path d="M664 255C680 259 691 269 700 283L811 445C820 460 832 470 848 475" fill="none" stroke="#111" strokeWidth="11" />
      <path d="M664 255C680 259 691 269 700 283L811 445C820 460 830 468 840 472" fill="none" stroke="#b80812" strokeWidth="9" />
      <path d="M648 253C668 254 684 265 697 285L808 447C820 464 836 475 866 482" fill="none" stroke="#222" strokeWidth="8" />
      <path d="M648 253C668 254 684 265 697 285L808 447C820 464 836 475 866 482" fill="none" stroke="#f7f8fc" strokeWidth="6" />

      <ellipse cx="582" cy="233" rx="91" ry="35" fill="#e00010" stroke="#2a0002" />
      <path d="M493 238C500 256 540 265 582 265S640 260 652 255" fill="none" stroke="#ff3a44" strokeWidth="2" opacity=".7" />
      <ellipse cx="582" cy="229.500" rx="84" ry="31" fill="#b9bcc8" stroke="#2a0002" />
      <path d="M625 252 648 243 655 250 668 254 674 262 658 262 634 259Z" fill="#c3c6d0" />
      <path d="M636 257C645 256 655 256 664 258" fill="none" stroke="#2a0002" />
      <ellipse cx="581.500" cy="229.500" rx="74.500" ry="28" fill="url(#bore)" stroke="#15171a" />
      <path d="M653 249C664 245 669 240 669 232" fill="none" stroke="#2a0002" strokeWidth="8" strokeLinecap="round" />
      <path d="M653 249C664 245 669 240 669 232" fill="none" stroke="#e00010" strokeWidth="6" strokeLinecap="round" />

      <ellipse cx="526" cy="274" rx="10.500" ry="14" fill="none" stroke="#111" strokeDasharray="2.500 2" />
      <path d="M514 258C530 263 550 265 570 266" fill="none" stroke="#e00010" strokeWidth="4" />

      <Pipe d={UPPER} />
      <Pipe d="M640 262V363" />
      <path d="M625 264C631 263 634 261 640 258" fill="none" stroke="#e00010" strokeWidth="4" />
      <path d="M636 257h10v8h-10z" fill="#e8101c" />
      <Pipe d={INNER} />
      <Pipe d={LOWER} />
      <path d="M525 370C550 366 605 368 638 359V367C612 371 590 373 568 372L608 382 606 391Z" fill="#e40010" stroke="#3a0004" strokeWidth=".8" />
      <path d="M586 377 612 383 610 391 584 385Z" fill="#e40010" />
      <path d="M540 370 606 386M560 369C590 370 615 367 636 363" fill="none" stroke="#ff3540" strokeWidth="2" opacity=".6" />
      <path d="M836 517 846 523 845 530 859 551 830 541 842 531Z" fill="#d5000e" stroke="#3a0004" />
      <circle cx="639.500" cy="363" r="4" fill="#f01622" />
      <path d="m634 391 34-14M680 422l31-14M740 497l26-12M774 522l23-11M689 291l7-6M802 459l8-8M671 370l-3 8M687 376l-4 7M570 367v6" stroke="#222" fill="none" strokeWidth=".8" />

      <ellipse cx="884.500" cy="494" rx="36.500" ry="16" fill="#e00010" stroke="#2a0002" />
      <path d="M851 498C858 507 872 507 886 507S910 505 918 498" fill="none" stroke="#ff3a44" strokeWidth="2" opacity=".7" />
      <ellipse cx="884" cy="490" rx="29.500" ry="12" fill="#d0d3dc" stroke="#2a0002" />
      <path d="M842 473 868 479 862 486 846 480Z" fill="#d9dbe3" />
      <path d="M842 472 868 479" stroke="#111" fill="none" />
      <path d="M838 480 856 485" stroke="#e00010" strokeWidth="5" />
      <ellipse cx="883.500" cy="490" rx="24.500" ry="9.500" fill="url(#bore)" stroke="#15171a" />

      <g strokeWidth="3">
        <path d="M366 653V640" stroke="#2c9a34" />
        <path d="m362.500 641 3.500-9 3.500 9z" fill="#1f7a28" />
        <path d="m366 653 9 3" stroke="#d41c2c" />
        <path d="m373 659 9-1-7-6z" fill="#d41c2c" />
        <path d="m366 653-9 3" stroke="#2020a8" />
        <path d="m359 652-8 5 9 2z" fill="#2020a8" />
      </g>
      <g fontFamily="Liberation Sans, sans-serif" fontSize="9">
        <text x="363" y="632" fill="#4b9c50">Y</text>
        <text x="380" y="661" fill="#d8303c">X</text>
        <text x="346" y="661" fill="#3030b8">Z</text>
      </g>
      <path d="M568 505v12l3-3 2.500 5 2-1-2.500-5h4z" fill="#fff" stroke="#222" strokeWidth=".8" />
    </svg>
  );
}

/* ---------- viewport overlays ---------- */
const HUD = [
  ["zoomfit", "Zoom to fit", false],
  ["zoomarea", "Zoom to area", false],
  ["prevview", "Previous view", false],
  ["section", "Section view", false],
  ["orient", "View orientation", true],
  ["display", "Display style", true],
  ["glasses", "Hide or show items", true],
  ["ball", "Edit appearance", false],
  ["scene", "Apply scene", true],
  ["viewset", "View settings", true],
];

function ViewToolbar() {
  return (
    <div className="absolute top-1 right-[279px] z-10 flex h-3">
      {HUD.map(([icon, label, caret]) => (
        <button key={icon} aria-label={label} className={"flex items-center justify-center gap-0.5 " + (caret ? "w-[23px]" : "w-4")}>
          <Icon name={icon} />
          {caret && <Caret />}
        </button>
      ))}
    </div>
  );
}

function Workspace() {
  return (
    <main className="relative flex flex-1 flex-col">
      <Scene />
      <CommandTabs />
      <ViewToolbar />
      <div className="absolute top-[5px] right-1 z-10 flex h-2.5 items-center">
        {["min", "restore", "close"].map((n) => (
          <button key={n} aria-label={n + " document"} className="flex w-4 justify-center">
            <Icon name={n} className="size-[9px]" />
          </button>
        ))}
      </div>
      <div className="relative flex flex-1 justify-between">
        <FeaturePanel />
        <div className="mt-[27px] flex w-[17px] flex-col">
          {["home", "library", "openfolder", "swsearch", "palette", "ball", "custom"].map((n) => (
            <button
              key={n}
              aria-label={n + " pane"}
              className={
                "flex h-[17px] items-center justify-center rounded-l-sm border border-[#80839a] " +
                (n === "ball" ? "bg-[#f6f7fb]" : "bg-[#b9bccd]")
              }
            >
              <Icon name={n} />
            </button>
          ))}
        </div>
      </div>
    </main>
  );
}

/* ---------- bottom ---------- */
function BottomTabs() {
  return (
    <nav className="flex h-3 border-t border-[#1b1c24] bg-[#e3e5ed] font-['Liberation_Sans',sans-serif] text-[9px] leading-[10px]">
      <div className="flex bg-[#b8bacb] px-px">
        {["M4 2v8M10 2 6 6l4 4z", "M9 2 4 6l5 4z", "m3 2 5 4-5 4z", "M8 2v8M2 2l4 4-4 4z"].map((d, i) => (
          <button key={d} aria-label={"Tab scroll " + (i + 1)} className="flex w-[11px] items-center justify-center border border-[#9a9db2]">
            <svg viewBox="0 0 12 12" className="size-[9px]"><path d={d} fill="#8d90a6" stroke="#8d90a6" /></svg>
          </button>
        ))}
      </div>
      <button className="ml-0.5 w-[39px] border-x border-[#5f6278] bg-[#eceef5] font-bold">Model</button>
      <button className="w-[72px] whitespace-nowrap border-r border-b border-[#5f6278] bg-[#b8bacb] text-[#16171f]">Motion Study 1</button>
    </nav>
  );
}

function StatusBar() {
  return (
    <footer className="flex h-[14px] items-center border-t border-[#85889b] bg-gradient-to-b from-[#dcdee8] to-[#b9bccc] pl-0.5 text-[#23253a]">
      <span className="leading-none">SolidWorks Premium 2009</span>
      <span className="ml-auto flex h-2.5 items-center border-x-2 border-[#eceef5] px-1 leading-none">Editing Part</span>
      <span className="ml-1 h-2.5 border-r-2 border-[#eceef5]" />
      <button aria-label="Help" className="ml-2"><Icon name="help" className="size-2.5" /></button>
      <button aria-label="Tags" className="ml-[34px]"><Icon name="tag" className="size-3" /></button>
      <svg viewBox="0 0 9 9" className="ml-3.5 mr-px size-[9px]" fill="#f6f7fb" aria-hidden="true">
        <path d="M7 1h2v2H7zM4 4h2v2H4zM7 4h2v2H7zM1 7h2v2H1zM4 7h2v2H4zM7 7h2v2H7z" />
      </svg>
    </footer>
  );
}

export default function App() {
  return (
    <div className="flex min-h-screen justify-center bg-black font-['Lato','Noto_Sans',sans-serif] text-[8px] leading-3 text-[#1d1e2a]">
      <div className="mt-px mb-0.5 flex w-full max-w-[900px] flex-col rounded-t border-r-[3px] border-l-2 border-[#8f92a8] bg-[#dfe2ea]">
        <TitleBar />
        <Ribbon />
        <Workspace />
        <BottomTabs />
        <StatusBar />
      </div>
    </div>
  );
}
